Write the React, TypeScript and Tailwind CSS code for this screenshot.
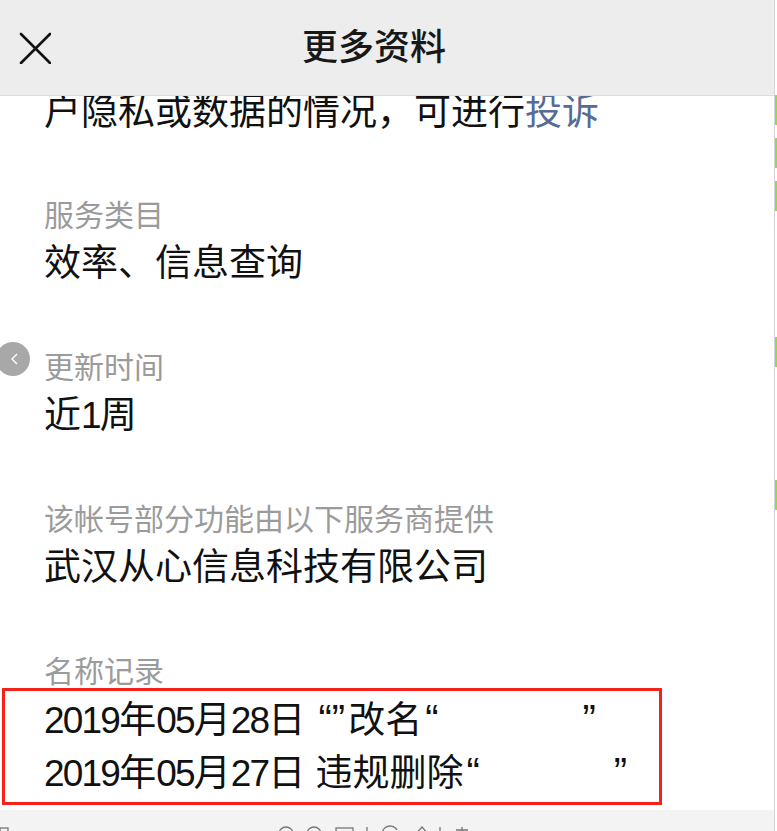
import React from "react";

const font = { fontFamily: '"Liberation Sans", "Noto Sans CJK SC", sans-serif' };

const sections = [
  { label: "服务类目", value: "效率、信息查询" },
  { label: "更新时间", value: "近1周" },
  { label: "该帐号部分功能由以下服务商提供", value: "武汉从心信息科技有限公司" },
];

function Num({ children }: { children: React.ReactNode }) {
  return <span className="tracking-[-1.8px]">{children}</span>;
}

function Q({ children }: { children: React.ReactNode }) {
  return <span className="inline-block px-[3px] text-[40px] leading-[40px] font-medium">{children}</span>;
}

function CloseIcon() {
  return (
    <svg width="32" height="32" viewBox="0 0 32 32" className="block">
      <path d="M2 2 L31 31 M31 2 L2 31" stroke="#111" strokeWidth="2.6" strokeLinecap="round" fill="none" />
    </svg>
  );
}

function BottomIcons() {
  return (
    <svg width="777" height="21" viewBox="0 0 777 21" className="block">
      <g stroke="#777" strokeWidth="1.3" fill="none">
        <rect x="0" y="18" width="8" height="8" />
        <circle cx="286" cy="24" r="7" />
        <circle cx="314" cy="24" r="7" />
        <rect x="336" y="18" width="17" height="10" />
        <path d="M367 17 V21" />
        <path d="M397 20 A8 8 0 1 0 397 28" />
        <path d="M414 26 L422 17 L430 26" />
        <path d="M440 17 V21" />
        <path d="M462 17 V21 M456 20 H468" />
      </g>
    </svg>
  );
}

function RightStrip() {
  const greens = [
    [95, 30],
    [138, 30],
    [181, 30],
    [337, 30],
    [480, 30],
  ];
  return (
    <div className="relative w-[3px] h-full bg-white border-l border-[#d6d6d6]">
      {greens.map(([top, h]) => (
        <div
          key={top}
          className="absolute left-0 w-[3px] bg-[#8ed760]"
          style={{ top, height: h }}
        />
      ))}
    </div>
  );
}

export default function App() {
  return (
    <div className="relative flex h-[831px] w-[777px] overflow-hidden bg-white" style={font}>
      <div className="flex w-[774px] flex-col">
        {/* Header */}
        <div className="relative flex h-[96px] shrink-0 items-center justify-center border-b border-[#dcdcdc] bg-[#ededed]">
          <div className="absolute left-[19px] top-[32px]">
            <CloseIcon />
          </div>
          <span className="pr-[26px] text-[36px] font-medium text-[#181818]">更多资料</span>
        </div>

        {/* Content */}
        <div className="flex flex-1 flex-col">
          <div className="h-[36px] pl-[44px] text-[37px] leading-[34px] text-[#111]">
            户隐私或数据的情况，可进行<span className="text-[#576b95]">投诉</span>
          </div>

          <div className="flex flex-col gap-[64px] pt-[66px] pl-[44px]">
            {sections.map((s) => (
              <div key={s.label} className="flex flex-col gap-[8px]">
                <div className="h-[36px] text-[30px] leading-[36px] text-[#9b9b9b]">{s.label}</div>
                <div className="h-[44px] text-[37px] leading-[44px] text-[#111]">
                  {s.value === "近1周" ? (
                    <>
                      近<Num>1</Num>周
                    </>
                  ) : (
                    s.value
                  )}
                </div>
              </div>
            ))}
          </div>

          <div className="mt-[64px] h-[34px] pl-[44px] text-[30px] leading-[36px] text-[#9b9b9b]">名称记录</div>

          <div className="ml-[2px] w-[660px] border-[3px] border-[#f4221b] bg-white pt-[3px] pb-[2px] pl-[39px] text-[37px] leading-[53px] text-[#111]">
            <div className="whitespace-nowrap">
              <Num>2019</Num>年<Num>05</Num>月<Num>28</Num>日 <Q>“”</Q>改名<Q>“</Q>
              <span className="inline-block w-[138px]" />
              <Q>”</Q>
            </div>
            <div className="whitespace-nowrap">
              <Num>2019</Num>年<Num>05</Num>月<Num>27</Num>日 违规删除<Q>“</Q>
              <span className="inline-block w-[128px]" />
              <Q>”</Q>
            </div>
          </div>

          <div className="h-[5px] bg-white" />
          <div className="flex-1 bg-[#f3f3f3]">
            <BottomIcons />
          </div>
        </div>
      </div>
      <RightStrip />

      {/* floating back button */}
      <div className="absolute left-[-4px] top-[342px] flex h-[34px] w-[34px] items-center justify-center rounded-full bg-[#a8a8a8]">
        <svg width="12" height="14" viewBox="0 0 12 14" className="ml-[4px]">
          <path d="M8 2 L3 7 L8 12" stroke="#fff" strokeWidth="1.4" fill="none" />
        </svg>
      </div>
    </div>
  );
}
